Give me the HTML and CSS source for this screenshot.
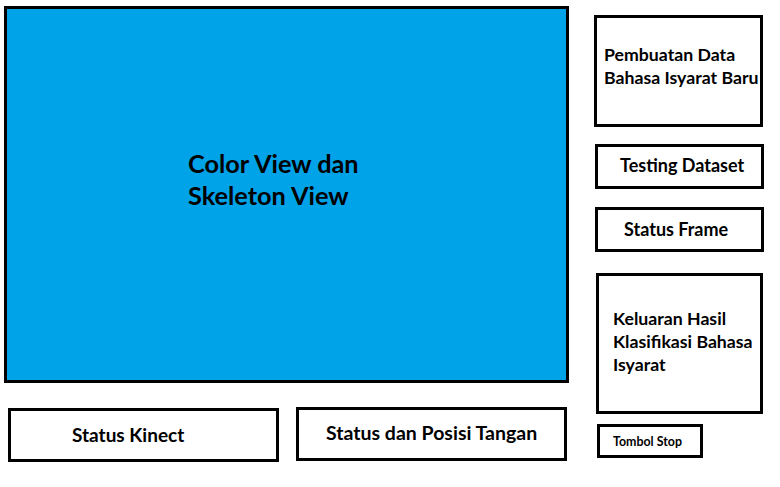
FILE: index.html
```html
<!DOCTYPE html>
<html lang="id">

<head>
  <meta charset="UTF-8">
  <meta name="viewport" content="width=device-width, initial-scale=1.0">
  <title>Rancangan Antarmuka Kinect</title>
  <link rel="stylesheet" href="styles.css">
</head>

<body>
  <div class="page">
    <div class="left">
      <div class="view">
        <p class="view-title">Color View dan<br>Skeleton View</p>
      </div>
      <div class="bottom">
        <div class="box kinect">Status Kinect</div>
        <div class="box hand">Status dan Posisi Tangan</div>
      </div>
    </div>

    <div class="right">
      <div class="box create">Pembuatan Data<br>Bahasa Isyarat Baru</div>
      <div class="box testing">Testing Dataset</div>
      <div class="box frame">Status Frame</div>
      <div class="box result">Keluaran Hasil<br>Klasifikasi Bahasa<br>Isyarat</div>
      <div class="box stop">Tombol Stop</div>
    </div>
  </div>
</body>

</html>
```

FILE: styles.css
```css
* {
  box-sizing: border-box;
}

body {
  margin: 0;
  background: #fff;
  color: #000;
  font-family: Lato, "Open Sans", sans-serif;
  font-weight: bold;
}

.page {
  display: flex;
  align-items: flex-start;
  padding: 6px 0 0 4px;
}

.left {
  width: 565px;
}

.view {
  height: 377px;
  border: 3px solid #000;
  background-color: #00a2e8;
  padding: 138px 0 0 181px;
}

.view-title {
  margin: 0;
  font-size: 25.3px;
  line-height: 32px;
}

.box {
  border: 3px solid #000;
  font-size: 17.7px;
  line-height: 23px;
}

/* baris bawah */
.bottom {
  display: flex;
  align-items: flex-start;
  margin-top: 24px;
}

.kinect {
  width: 271px;
  height: 54px;
  margin: 1px 0 0 4px;
  padding: 12px 0 0 61px;
  font-size: 19px;
}

.hand {
  width: 271px;
  height: 54px;
  margin-left: 17px;
  padding: 11px 0 0 27px;
  font-size: 19.5px;
}

/* kolom kanan */
.right {
  width: 170px;
  margin-left: 25px;
}

.create {
  width: 169px;
  height: 112px;
  margin-top: 9px;
  padding: 25px 0 0 7px;
}

.testing {
  width: 169px;
  height: 45px;
  margin: 17px 0 0 1px;
  padding: 7px 0 0 22px;
  font-size: 18px;
}

.frame {
  width: 169px;
  height: 45px;
  margin: 18px 0 0 1px;
  padding: 8px 0 0 26px;
  font-size: 18px;
}

.result {
  width: 167px;
  height: 141px;
  margin: 21px 0 0 2px;
  padding: 31px 0 0 14px;
}

.stop {
  width: 106px;
  height: 34px;
  margin: 10px 0 0 3px;
  padding: 7px 0 0 13px;
  font-size: 12.4px;
  line-height: 16px;
}
```
